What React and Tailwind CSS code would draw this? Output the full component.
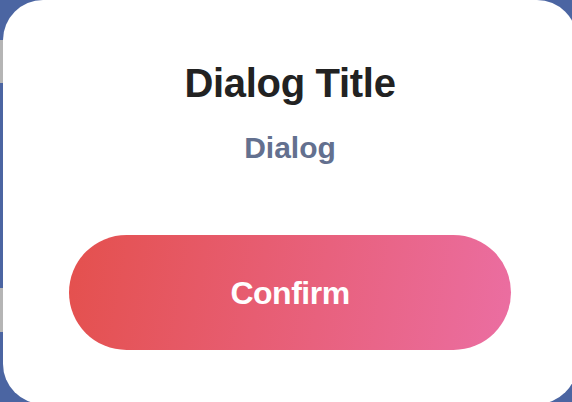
import React from 'react';

const Dialog = ({ title = 'Dialog Title', message = 'Dialog', confirmLabel = 'Confirm' }) => {
  return (
    <div className="flex h-[404px] w-[574px] shrink-0 flex-col items-center rounded-[40px] bg-white pt-[63px]">
      <h2 className="text-[40px] leading-none font-bold tracking-[-0.3px] text-[#222222]">{title}</h2>
      <p className="mt-[30px] text-[30px] leading-none font-semibold text-[#63708f]">{message}</p>
      <button className="mt-[72px] flex h-[115px] w-[442px] items-center justify-center rounded-full bg-[linear-gradient(100deg,#e4504d,#eb6ea2)] text-[32px] font-bold tracking-[-0.5px] text-white">
        {confirmLabel}
      </button>
    </div>
  );
};

export default function App() {
  return (
    <div className="flex h-[402px] w-[572px] overflow-hidden bg-[#4b65a2] font-['Liberation_Sans',Arial,sans-serif]">
      {/* left edge strip */}
      <div className="flex w-[3px] shrink-0 flex-col">
        <div className="h-[40px]" />
        <div className="h-[43px] bg-[#b5b5b5]" />
        <div className="h-[205px]" />
        <div className="h-[44px] bg-[#b5b5b5]" />
      </div>
      <Dialog />
    </div>
  );
}
